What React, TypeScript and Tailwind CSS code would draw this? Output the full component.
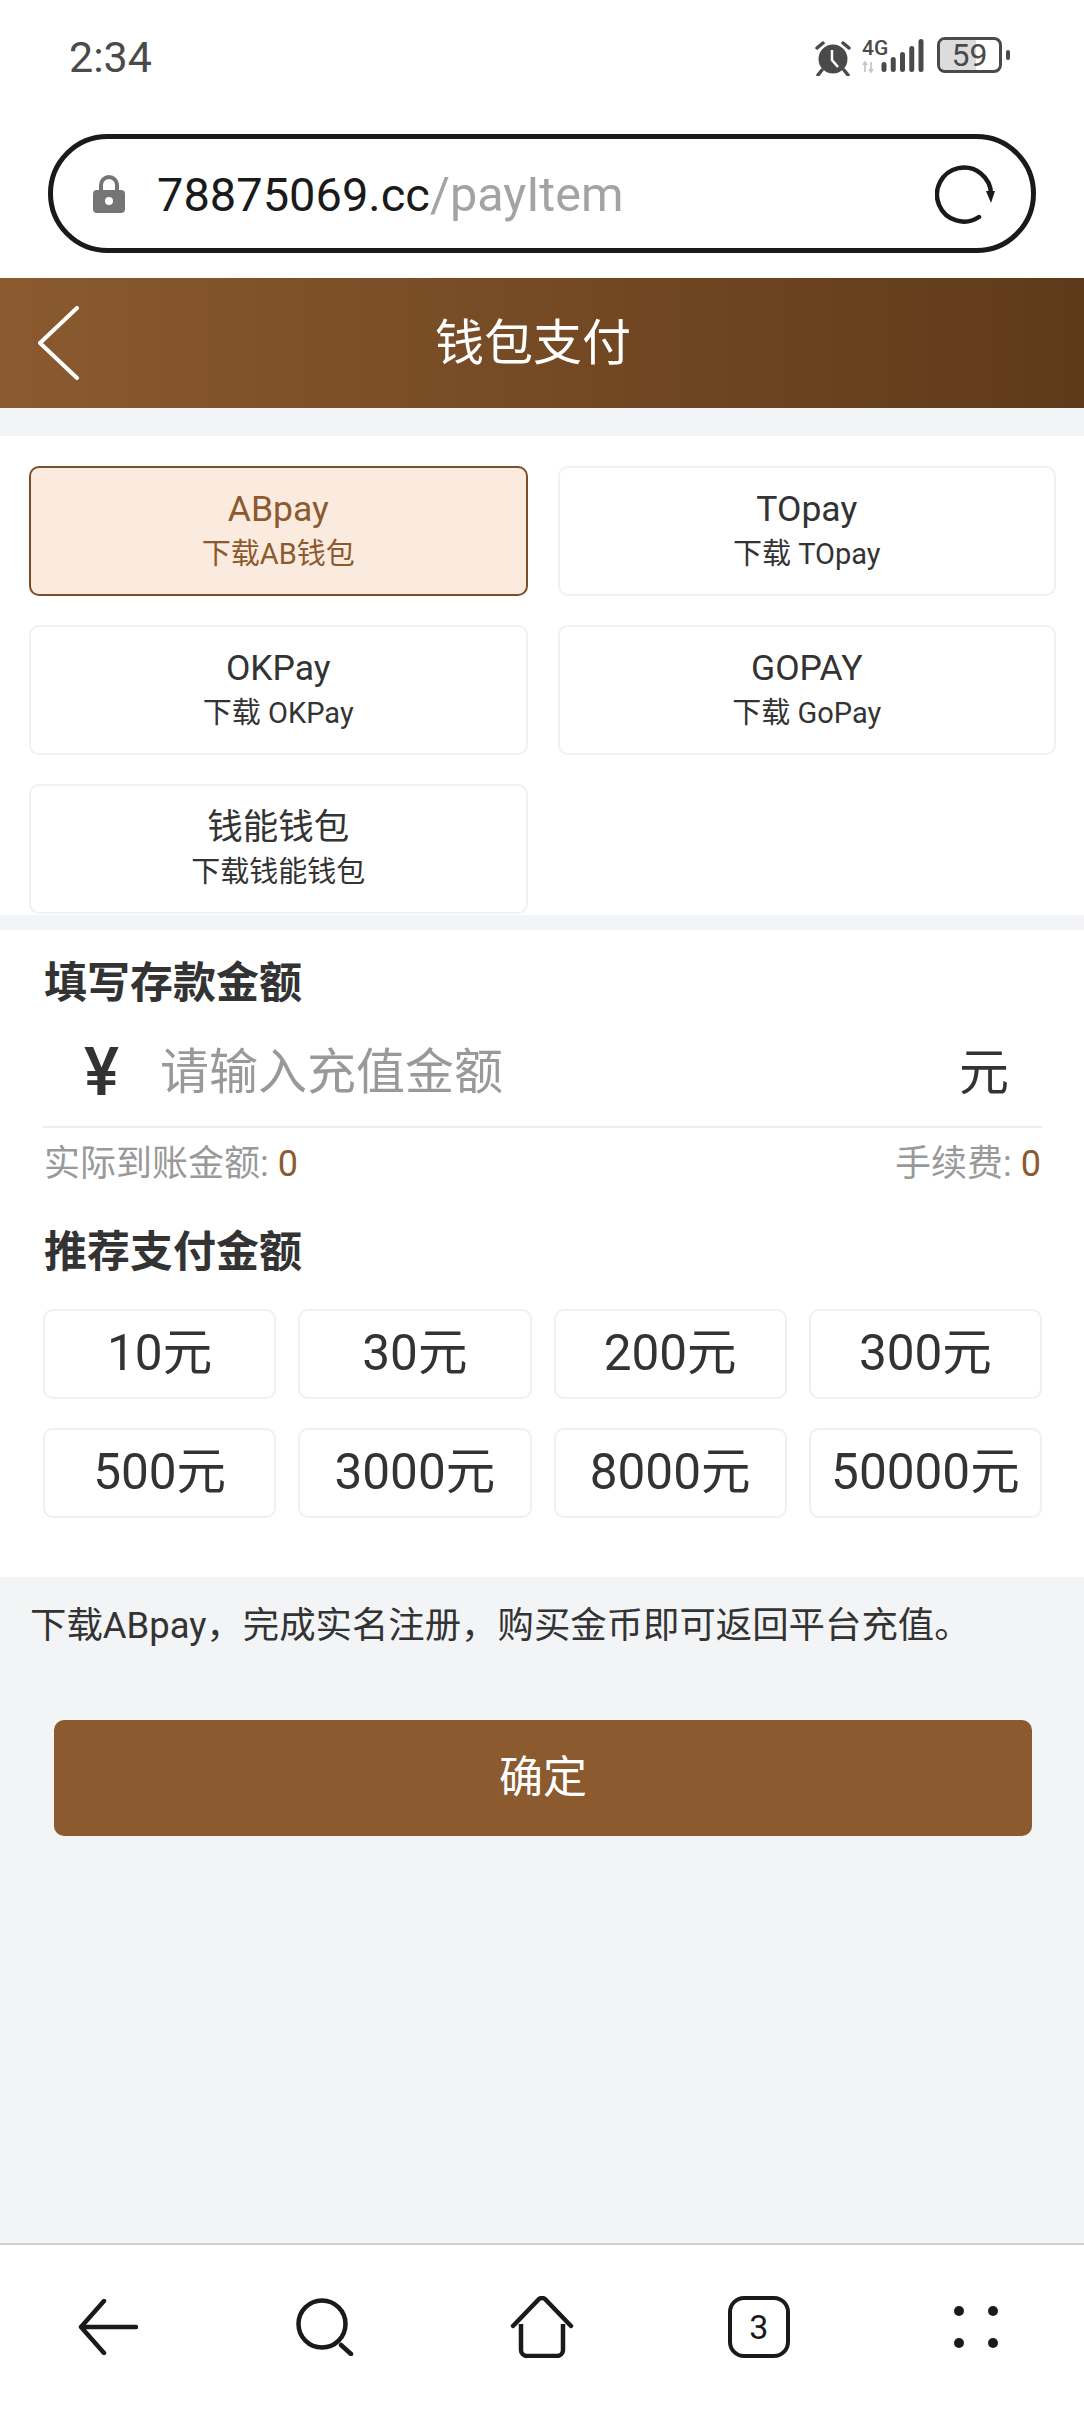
import React from 'react';

const FONT = 'font-["Roboto","Noto_Sans_CJK_SC",sans-serif]';

const wallets = [
  { name: 'ABpay', sub: '下载AB钱包', active: true },
  { name: 'TOpay', sub: '下载 TOpay' },
  { name: 'OKPay', sub: '下载 OKPay' },
  { name: 'GOPAY', sub: '下载 GoPay' },
  { name: '钱能钱包', sub: '下载钱能钱包' },
];

const amounts = ['10元', '30元', '200元', '300元', '500元', '3000元', '8000元', '50000元'];

const StatusBar = () => (
  <div className="flex h-[134px] shrink-0 items-start justify-between bg-white pl-[69px] pr-[74px] pt-[33px]">
    <span className="text-[43px] leading-[48px] text-[#4a4a4a]">2:34</span>
    <div className="flex items-start pt-[4px]">
      <svg width="38" height="36" viewBox="0 0 38 36" className="mt-[3px]">
        <circle cx="19" cy="19" r="14.5" fill="#4a4a4a" />
        <path d="M18 10v10l6 7" fill="none" stroke="#fff" strokeWidth="2.5" />
        <path d="M3 8l6-5M35 8l-6-5M8 30l-4 5M30 30l4 5" stroke="#4a4a4a" strokeWidth="3.5" strokeLinecap="round" />
      </svg>
      <svg width="66" height="42" viewBox="0 -6 66 42" className="ml-[10px] mt-[-4px]">
        <text x="0" y="16" fontSize="21" fontWeight="500" fill="#4a4a4a" fontFamily="Roboto">4G</text>
        <path d="M3 33v-9M1 26l2-3 2 3M9 23v9M7 30l2 3 2-3" fill="none" stroke="#c8c8c8" strokeWidth="1.8" />
        <path d="M22 30.5v-5M31.25 30.5v-10M40.5 30.5v-15M49.75 30.5v-21M59 30.5V2.5" stroke="#4a4a4a" strokeWidth="5" strokeLinecap="round" />
      </svg>
      <div className="relative ml-[9px] h-[36px] w-[65px] rounded-[8px] border-[3px] border-[#4a4a4a]">
        <div className="absolute inset-y-0 left-0 w-[36px] rounded-l-[5px] bg-[#dcdcdc]" />
        <span className="relative flex h-full items-center justify-center text-[32px] leading-none text-[#4a4a4a]">59</span>
      </div>
      <div className="ml-[4px] mt-[13px] h-[10px] w-[4px] rounded-full bg-[#4a4a4a]" />
    </div>
  </div>
);

const AddressBar = () => (
  <div className="mx-[48px] flex h-[119px] shrink-0 items-center rounded-full border-[5px] border-[#1a1a1a] bg-white pl-[40px] pr-[36px]">
    <svg width="32" height="38" viewBox="0 0 32 38" className="shrink-0">
      <path d="M8 16V10a8 8 0 0 1 16 0v6" fill="none" stroke="#757575" strokeWidth="4" />
      <rect x="0" y="15" width="32" height="23" rx="4" fill="#757575" />
      <circle cx="16" cy="26" r="4" fill="#fff" />
    </svg>
    <span className="ml-[32px] flex-1 pt-[3px] text-[47px] leading-none text-[#1a1a1a]">
      78875069.cc<span className="text-[48.5px] text-[#a3a3a3]">/payItem</span>
    </span>
    <svg width="60" height="60" viewBox="0 0 60 60" className="shrink-0">
      <path d="M44 53A27 27 0 1 1 56 30" fill="none" stroke="#1a1a1a" strokeWidth="4.5" strokeLinecap="round" />
      <path d="M51 27h9l-4 12z" fill="#1a1a1a" />
    </svg>
  </div>
);

const Header = () => (
  <div className="flex h-[130px] shrink-0 items-center bg-gradient-to-r from-[#8b5a2f] to-[#5f3a1a]">
    <svg width="44" height="74" viewBox="0 0 44 74" className="ml-[36px] shrink-0">
      <path d="M41 2L4 37l37 35" fill="none" stroke="#fff" strokeWidth="4" strokeLinecap="round" strokeLinejoin="round" />
    </svg>
    <h1 className="flex-1 pr-[98px] text-center text-[49px] font-normal leading-none text-white">钱包支付</h1>
  </div>
);

const WalletGrid = () => (
  <div className="mt-[28px] grid shrink-0 grid-cols-2 gap-x-[30px] gap-y-[29px] bg-white pb-[1px] pl-[29px] pr-[28px] pt-[30px]">
    {wallets.map((w) => (
      <div
        key={w.name}
        className={
          w.active
            ? 'flex h-[130px] flex-col items-center justify-center rounded-[10px] border-2 border-[#7a4f2a] bg-[#fbebdf] text-[#8b5a2f]'
            : 'flex h-[130px] flex-col items-center justify-center rounded-[10px] border-2 border-[#f1f1f1] bg-white text-[#333]'
        }
      >
        <span className="text-[35.5px] leading-[46px]">{w.name}</span>
        <span className="text-[29px] leading-[44px]">{w.sub}</span>
      </div>
    ))}
  </div>
);

const AmountForm = () => (
  <div className="mt-[15px] shrink-0 bg-white pb-[59px] pl-[43px] pr-[42px] pt-[22.5px]">
    <h2 className="pl-[1px] text-[43px] font-bold leading-[60px] text-[#333]">填写存款金额</h2>
    <div className="flex h-[115px] items-center border-b-2 border-[#eee] pt-[7px]">
      <span className="ml-[41px] w-[76px] text-[66px] font-medium leading-none text-[#333]">¥</span>
      <span className="flex-1 text-[49px] leading-none text-[#999]">请输入充值金额</span>
      <span className="mr-[33px] text-[50px] leading-none text-[#333]">元</span>
    </div>
    <div className="flex h-[68px] items-center justify-between pl-[1px] pr-[1px] pt-[4px] text-[36px] text-[#999]">
      <span>
        实际到账金额: <span className="text-[#8b5a2f]">0</span>
      </span>
      <span>
        手续费: <span className="text-[#8b5a2f]">0</span>
      </span>
    </div>
    <h2 className="mt-[26.5px] pl-[1px] text-[43px] font-bold leading-[60px] text-[#333]">推荐支付金额</h2>
    <div className="mt-[27px] grid grid-cols-4 gap-x-[22px] gap-y-[29px]">
      {amounts.map((a) => (
        <div
          key={a}
          className="flex h-[90px] items-center justify-center rounded-[10px] border-2 border-[#f0f0f0] text-[49.5px] leading-none text-[#333]"
        >
          {a}
        </div>
      ))}
    </div>
  </div>
);

const BottomNav = () => (
  <div className="grid h-[169px] shrink-0 grid-cols-5 items-center justify-items-center border-t-2 border-[#d0d0d0] bg-white pb-[4px]">
    <svg width="60" height="56" viewBox="0 0 60 56">
      <path d="M3 28h55M26 2L3 28l23 26" fill="none" stroke="#1a1a1a" strokeWidth="4.5" strokeLinecap="round" strokeLinejoin="round" />
    </svg>
    <svg width="58" height="58" viewBox="0 0 58 58">
      <circle cx="26" cy="26" r="23.5" fill="none" stroke="#1a1a1a" strokeWidth="4.5" />
      <path d="M45 47l10 9" stroke="#1a1a1a" strokeWidth="4.5" strokeLinecap="round" />
    </svg>
    <svg width="64" height="62" viewBox="0 0 64 62">
      <path d="M3 30L28 4a5 5 0 0 1 8 0l25 26" fill="none" stroke="#1a1a1a" strokeWidth="4.5" strokeLinecap="round" />
      <path d="M11 28v26a6 6 0 0 0 6 6h30a6 6 0 0 0 6-6V28" fill="none" stroke="#1a1a1a" strokeWidth="4.5" />
    </svg>
    <div className="flex h-[62px] w-[62px] items-center justify-center rounded-[16px] border-[4.5px] border-[#1a1a1a] text-[34px] leading-none text-[#1a1a1a]">
      3
    </div>
    <div className="grid grid-cols-2 gap-x-[24px] gap-y-[22px]">
      <div className="h-[10px] w-[10px] rounded-full bg-[#1a1a1a]" />
      <div className="h-[10px] w-[10px] rounded-full bg-[#1a1a1a]" />
      <div className="h-[10px] w-[10px] rounded-full bg-[#1a1a1a]" />
      <div className="h-[10px] w-[10px] rounded-full bg-[#1a1a1a]" />
    </div>
  </div>
);

const App = () => {
  return (
    <div className={`flex h-[2412px] w-[1084px] flex-col overflow-hidden bg-[#f3f4f6] ${FONT}`}>
      {/* Browser chrome */}
      <div className="shrink-0 bg-white pb-[25px]">
        <StatusBar />
        <AddressBar />
      </div>
      <Header />
      <WalletGrid />
      <AmountForm />
      {/* Tip and submit */}
      <div className="flex flex-1 flex-col">
        <p className="mt-[24px] pl-[30px] text-[36.4px] leading-[50px] text-[#333]">
          下载ABpay，完成实名注册，购买金币即可返回平台充值。
        </p>
        <button className="ml-[54px] mt-[69px] flex h-[116px] w-[978px] items-center justify-center rounded-[10px] bg-[#8b5a2f] text-[44px] leading-none text-white">
          确定
        </button>
      </div>
      <BottomNav />
    </div>
  );
};

export default App;
